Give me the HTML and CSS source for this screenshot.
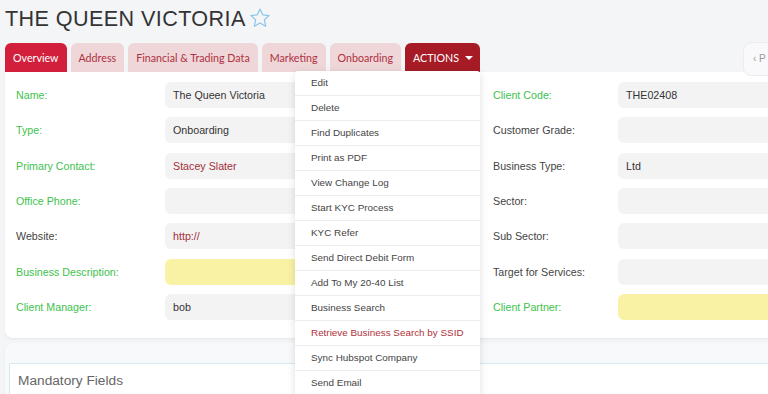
FILE: index.html
```html
<!DOCTYPE html>
<html>
<head>
<meta charset="utf-8">
<link rel="stylesheet" href="styles.css">
</head>
<body>
<div class="page">
  <h1 class="title">THE QUEEN VICTORIA<svg class="star" viewBox="0 0 24 24" width="22" height="22"><path d="M12 2.2l2.95 6.35 6.95.78-5.15 4.72 1.42 6.85L12 17.4l-6.17 3.5 1.42-6.85L2.1 9.33l6.95-.78z" fill="none" stroke="#8cc4ea" stroke-width="1.3" stroke-linejoin="round"/></svg></h1>
  <div class="tabs">
    <div class="tab active">Overview</div>
    <div class="tab">Address</div>
    <div class="tab">Financial &amp; Trading Data</div>
    <div class="tab">Marketing</div>
    <div class="tab">Onboarding</div>
    <div class="tab actions">ACTIONS <span class="caret"></span></div>
  </div>
  <div class="pager">&#8249; P</div>
  <div class="card">
    <div class="col left">
      <div class="row"><span class="lbl req">Name:</span><span class="inp">The Queen Victoria</span></div>
      <div class="row"><span class="lbl req">Type:</span><span class="inp">Onboarding</span></div>
      <div class="row"><span class="lbl req">Primary Contact:</span><span class="inp link">Stacey Slater</span></div>
      <div class="row"><span class="lbl req">Office Phone:</span><span class="inp"></span></div>
      <div class="row"><span class="lbl">Website:</span><span class="inp link">http://</span></div>
      <div class="row"><span class="lbl req">Business Description:</span><span class="inp yellow"></span></div>
      <div class="row"><span class="lbl req">Client Manager:</span><span class="inp">bob</span></div>
    </div>
    <div class="col right">
      <div class="row"><span class="lbl req">Client Code:</span><span class="inp">THE02408</span></div>
      <div class="row"><span class="lbl">Customer Grade:</span><span class="inp"></span></div>
      <div class="row"><span class="lbl">Business Type:</span><span class="inp">Ltd</span></div>
      <div class="row"><span class="lbl">Sector:</span><span class="inp"></span></div>
      <div class="row"><span class="lbl">Sub Sector:</span><span class="inp"></span></div>
      <div class="row"><span class="lbl">Target for Services:</span><span class="inp"></span></div>
      <div class="row"><span class="lbl req">Client Partner:</span><span class="inp yellow"></span></div>
    </div>
  </div>
  <div class="panel">
    <div class="mandatory">Mandatory Fields</div>
  </div>
  <ul class="menu">
    <li>Edit</li>
    <li>Delete</li>
    <li>Find Duplicates</li>
    <li>Print as PDF</li>
    <li>View Change Log</li>
    <li>Start KYC Process</li>
    <li>KYC Refer</li>
    <li>Send Direct Debit Form</li>
    <li>Add To My 20-40 List</li>
    <li>Business Search</li>
    <li class="hot">Retrieve Business Search by SSID</li>
    <li>Sync Hubspot Company</li>
    <li>Send Email</li>
  </ul>
</div>
</body>
</html>
```

FILE: styles.css
```css
html, body {
  margin: 0;
  padding: 0;
}
body {
  background: #f4f5f7;
  width: 768px;
  height: 394px;
  overflow: hidden;
  font-family: "Liberation Sans", Arial, sans-serif;
  color: #333;
}
.page {
  position: relative;
  width: 990px;
  padding: 0 5px;
}
.title {
  margin: 0;
  padding-top: 7px;
  height: 24px;
  line-height: 24px;
  font-size: 21.6px;
  font-weight: normal;
  letter-spacing: 0.4px;
  color: #333;
  display: flex;
  align-items: center;
}
.star {
  margin-left: 3px;
  margin-top: -2px;
}
.tabs {
  display: flex;
  gap: 4px;
  margin-top: 12px;
  height: 29px;
}
.tab {
  font-family: Lato, "Liberation Sans", sans-serif;
  font-size: 10.7px;
  line-height: 29px;
  padding: 0 8px;
  border-radius: 6px 6px 0 0;
  background: #eed6d9;
  color: #b0313e;
}
.tab.active {
  background: #d21f3b;
  color: #fff;
}
.tab.actions {
  background: #a61b25;
  color: #fff;
  padding: 0 7px 0 8px;
}
.caret {
  display: inline-block;
  width: 0;
  height: 0;
  border-left: 4px solid transparent;
  border-right: 4px solid transparent;
  border-top: 4px solid #fff;
  margin-left: 3px;
  vertical-align: 2px;
}
.pager {
  position: absolute;
  left: 743px;
  top: 42px;
  width: 40px;
  height: 34px;
  box-sizing: border-box;
  background: #f9f9fb;
  border: 1px solid #ececf0;
  border-radius: 8px;
  font-size: 10px;
  line-height: 32px;
  padding-left: 9px;
  color: #999;
}
.card {
  background: #fff;
  border-radius: 0 8px 8px 8px;
  box-shadow: 0 1px 3px rgba(0, 0, 0, 0.06);
  display: grid;
  grid-template-columns: 477px 1fr;
  padding: 10px 0 18px;
}
.col {
  display: flex;
  flex-direction: column;
  gap: 9.33px;
  padding-left: 11px;
}
.col.left {
  padding-right: 10px;
}
.col.right {
  padding-right: 10px;
}
.row {
  display: flex;
  align-items: center;
  height: 26px;
}
.lbl {
  font-size: 10.7px;
  color: #444;
  flex: none;
}
.left .lbl {
  width: 149px;
}
.right .lbl {
  width: 125px;
}
.lbl.req {
  color: #3ec24e;
}
.inp {
  flex: 1;
  height: 26px;
  box-sizing: border-box;
  background: #f3f3f3;
  border-radius: 6px;
  padding-left: 8px;
  font-size: 10.7px;
  line-height: 26px;
  color: #333;
}
.inp.link {
  color: #a3303a;
}
.inp.yellow {
  background: #f9f1a3;
}
.panel {
  margin-top: 5px;
  background: #f7f9fb;
  border-radius: 8px;
  box-shadow: 0 1px 3px rgba(0, 0, 0, 0.05);
  padding: 20px 0 0 4px;
  height: 80px;
}
.mandatory {
  background: #fff;
  border: 1px solid #d6e9ef;
  padding: 9px 8px 0;
  height: 60px;
  font-size: 13.7px;
  line-height: 16px;
  color: #666;
}
.menu {
  position: absolute;
  left: 295px;
  top: 71px;
  width: 185px;
  margin: 0;
  padding: 0;
  list-style: none;
  background: #fff;
  border-radius: 3px;
  box-shadow: 0 2px 8px rgba(0, 0, 0, 0.13);
}
.menu li {
  height: 24px;
  line-height: 24px;
  border-bottom: 1px solid #ececec;
  padding-left: 16px;
  font-size: 9.9px;
  color: #444;
}
.menu li.hot {
  color: #b0303a;
}
```
